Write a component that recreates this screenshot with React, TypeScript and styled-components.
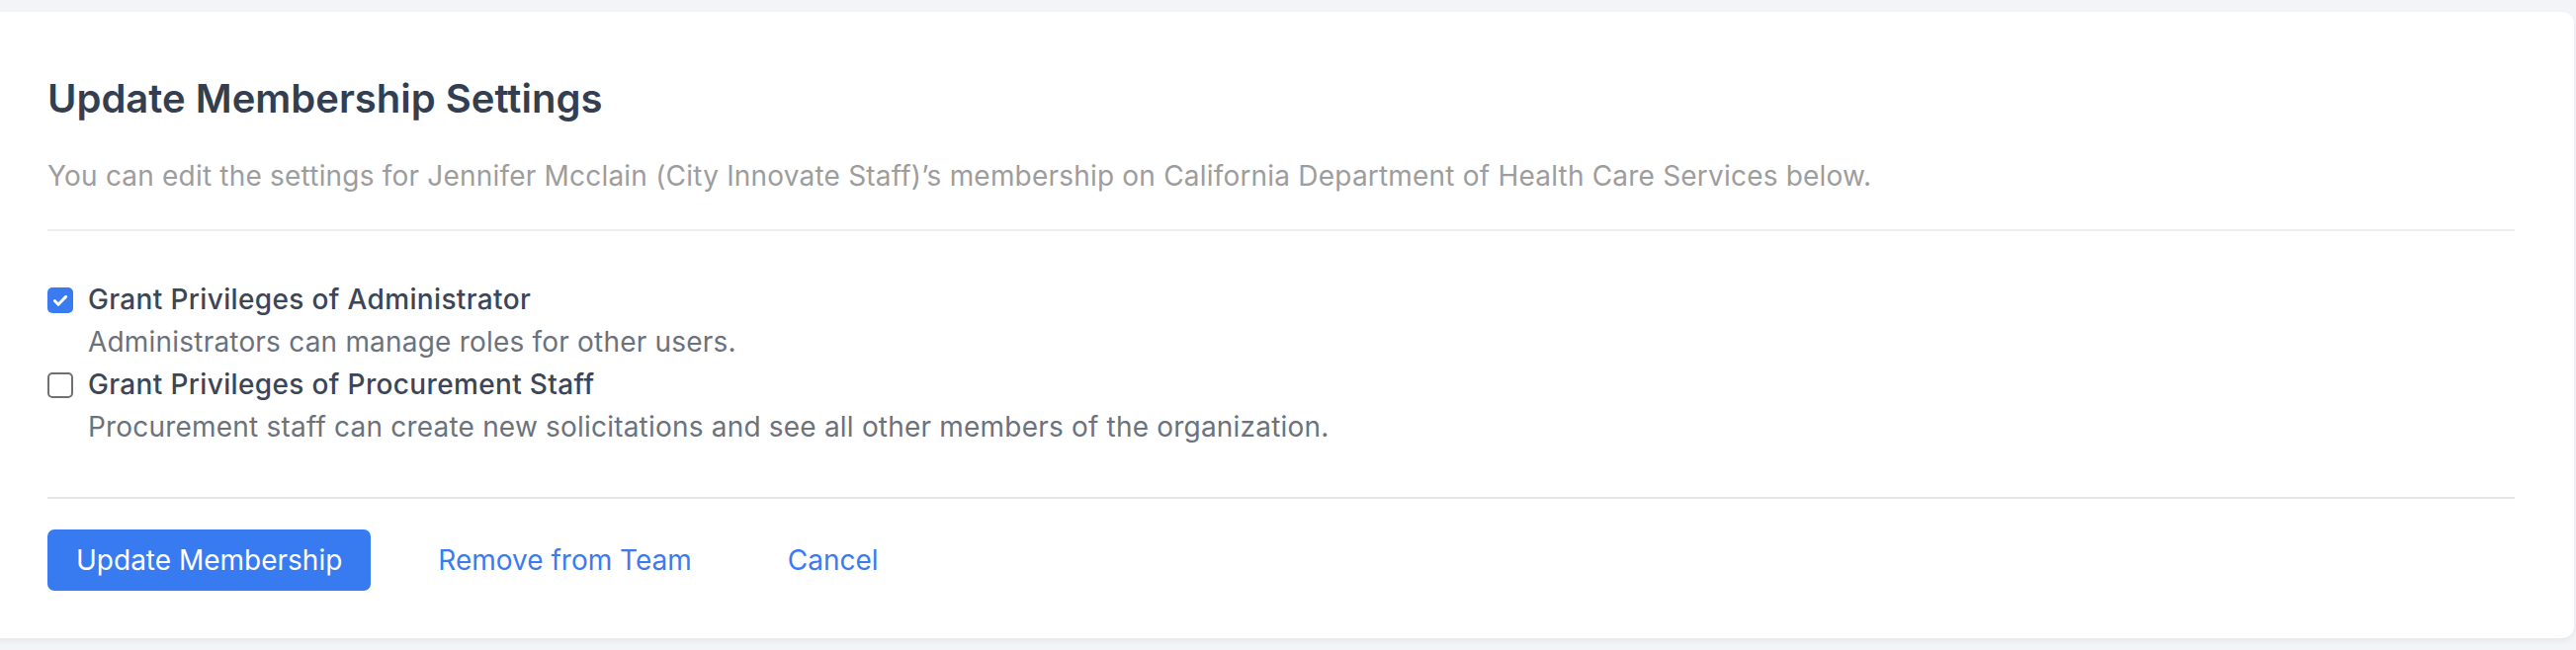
import styled, { createGlobalStyle } from "styled-components";
import { useState } from "react";

const GlobalStyle = createGlobalStyle`
    html, body {
        margin: 0;
        padding: 0;
        background: #f3f4f7;
    }
    body {
        font-family: Inter, "Noto Sans", "Liberation Sans", sans-serif;
        overflow: hidden;
    }
`

const Page = styled.div`
    padding-top: 12px;
    height: 658px;
    box-sizing: border-box;
`

const Card = styled.section`
    background: #fff;
    border-radius: 12px;
    margin: 0 2px 0 -14px;
    padding: 64px 60px 48px 62px;
    box-shadow: 0 3px 6px rgba(30, 40, 90, 0.06);
`

const Title = styled.h2`
    margin: 0;
    font-size: 40px;
    line-height: 48px;
    font-weight: 600;
    color: #333f50;
`

const Intro = styled.p`
    margin: 33px 0 0;
    font-size: 28px;
    line-height: 42px;
    font-weight: 400;
    letter-spacing: 0.2px;
    color: #9d9d9d;
`

const Divider = styled.hr<{ $gap: number }>`
    margin: ${p => p.$gap}px 0 0;
    border: none;
    height: 2px;
    background: ${p => p.$gap > 45 ? "#e4e4e4" : "#efefef"};
`

const Options = styled.div`
    margin-top: 48px;
    display: flex;
    flex-direction: column;
`

const Option = styled.label`
    display: grid;
    grid-template-columns: 26px 1fr;
    column-gap: 15px;
    align-items: center;
    font-size: 28px;
    line-height: 43px;
    cursor: pointer;
`

const Box = styled.span<{ $checked: boolean }>`
    width: 26px;
    height: 26px;
    box-sizing: border-box;
    border-radius: 5px;
    display: flex;
    align-items: center;
    justify-content: center;
    background: ${p => p.$checked ? "#3a7bf1" : "#fff"};
    border: ${p => p.$checked ? "none" : "2px solid #707070"};
`

const Label = styled.span`
    color: #3c4657;
    font-weight: 500;
    letter-spacing: 0.35px;
`

const Hint = styled.span`
    grid-column: 2;
    color: #6c727c;
    letter-spacing: 0.2px;
`

const Actions = styled.div`
    margin-top: 31px;
    display: flex;
    align-items: center;
    gap: 39px;
`

const Button = styled.button<{ $primary?: boolean }>`
    height: 62px;
    padding: 0 29px;
    border: none;
    border-radius: 7px;
    font-family: inherit;
    font-size: 28px;
    font-weight: 400;
    cursor: pointer;
    background: ${p => p.$primary ? "#387bf0" : "transparent"};
    color: ${p => p.$primary ? "#fff" : "#3a7bf0"};
`

const roles = [
    { title: "Grant Privileges of Administrator", hint: "Administrators can manage roles for other users." },
    { title: "Grant Privileges of Procurement Staff", hint: "Procurement staff can create new solicitations and see all other members of the organization." },
]

export default function App() {
    const [checked, setChecked] = useState<boolean[]>([true, false])

    const toggle = (i: number) => {
        setChecked(checked.map((c, idx) => idx === i ? !c : c))
    }

    return (
        <Page>
            <GlobalStyle />
            <Card>
                <Title>Update Membership Settings</Title>
                <Intro>You can edit the settings for Jennifer Mcclain (City Innovate Staff)’s membership on California Department of Health Care Services below.</Intro>
                <Divider $gap={33} />
                <Options>
                    {roles.map((r, i) => (
                        <Option key={r.title} onClick={() => toggle(i)}>
                            <Box $checked={checked[i]}>
                                {checked[i] && (
                                    <svg width="18" height="18" viewBox="0 0 16 16">
                                        <path d="M3 8.5l3.2 3.2L13 4.8" fill="none" stroke="#fff" strokeWidth="2.6" strokeLinecap="round" strokeLinejoin="round" />
                                    </svg>
                                )}
                            </Box>
                            <Label>{r.title}</Label>
                            <Hint>{r.hint}</Hint>
                        </Option>
                    ))}
                </Options>
                <Divider $gap={49} />
                <Actions>
                    <Button $primary>Update Membership</Button>
                    <Button>Remove from Team</Button>
                    <Button>Cancel</Button>
                </Actions>
            </Card>
        </Page>
    )
}
